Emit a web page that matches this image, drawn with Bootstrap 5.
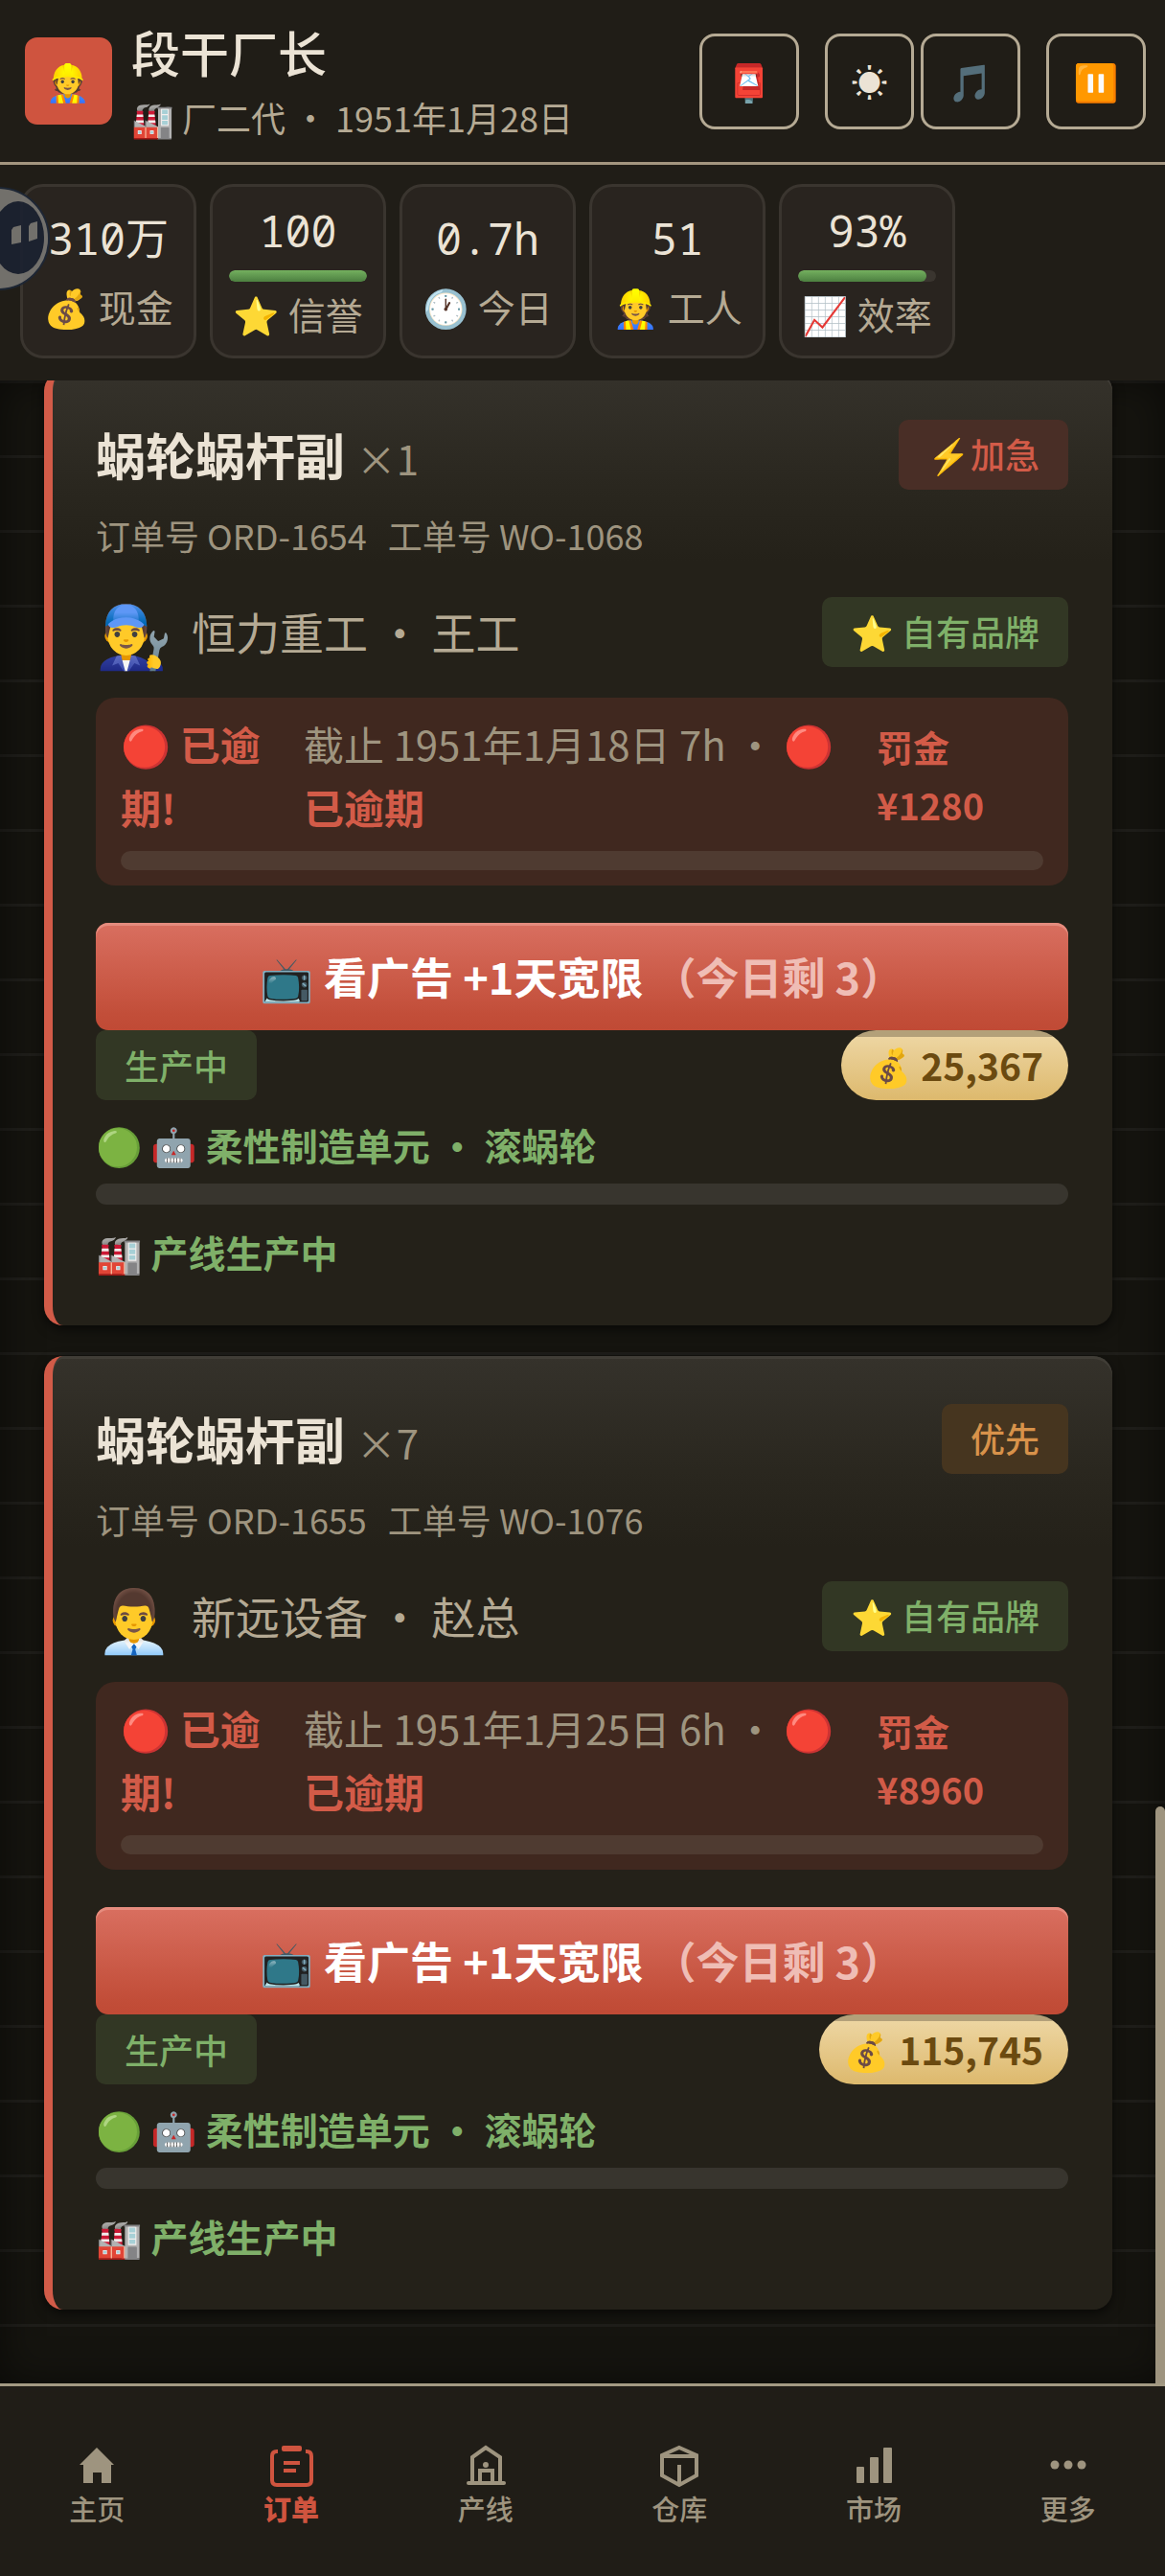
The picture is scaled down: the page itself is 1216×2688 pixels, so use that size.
<!DOCTYPE html>
<html lang="zh-CN">
<head>
<meta charset="utf-8">
<meta name="viewport" content="width=device-width, initial-scale=1">
<title>订单</title>
<link href="https://cdn.jsdelivr.net/npm/bootstrap@5.3.0/dist/css/bootstrap.min.css" rel="stylesheet">
<style>
:root{--bar:#201d17;--cream:#ebe3d5;--sand:#b5aa94;--mute:#9e947f;--red:#d25b48;--green:#7fb069}
body{background:#15140f;color:var(--cream);font-family:"Noto Sans CJK SC","Noto Color Emoji",sans-serif;line-height:1.6}
.shell{min-height:100vh}
.topbar,.stats{background:var(--bar);z-index:3}
.topbar{height:172px;border-bottom:3px solid #a3957f;padding:0 20px 0 26px}
.avatar{width:91px;height:91px;border-radius:13px;background:#cf543f;font-size:38px}
.who{padding:6px 0 0 20px}
.boss{font-size:51px;line-height:68px;font-weight:500}
.rank{font-size:36px;line-height:68px;color:var(--sand)}
.tools{gap:27px}
.tool-pair{gap:7px}
.tool{width:104px;height:100px;border:3px solid var(--sand);border-radius:16px;background:none;color:var(--cream);font-size:38px;padding:0}
.tool-sun{width:93px}
.stats{height:225px;padding:20px 21px 0;gap:14px}
.tile{width:184px;height:182px;border:3px solid #3a352f;border-radius:24px;background:#29241f;padding:0 17px 2px}
.figure-num{font-family:"Noto Sans Mono","Noto Sans CJK SC",monospace;font-size:45px;line-height:74px}
.figure-cap{font-size:39px;line-height:66px;color:var(--sand);white-space:nowrap}
.meter{height:12px;border-radius:6px;background:#3a352f;margin-top:4px}
.meter .progress-bar{background:linear-gradient(#74b05f,#4c7f40);border-radius:6px}
.floor{background:linear-gradient(transparent 75px,#1f1e1a 75px) 0 3px/100% 78px,#15140f;box-shadow:inset 0 0 40px #0008;padding:0 55px 75px 46px}
.order{background:linear-gradient(#35322b 0,#2a271f 12%,#242119 20%);border-left:9px solid var(--red);border-radius:20px;padding:44px 46px 46px 45px;box-shadow:0 4px 12px #0009,inset 0 3px 0 #403d36}
.order-first{margin-top:-9px}
.order+.order{margin-top:32px}
.item-name{font-size:52px;font-weight:700;line-height:84px;margin:0}
.item-qty{font-size:42px;line-height:1;font-weight:400;color:var(--mute)}
.chip{border-radius:10px;height:73px;padding:0 30px;font-size:36px;font-weight:500;display:inline-flex;align-items:center;white-space:pre}
.chip-red{background:#492e26;color:var(--red)}
.chip-amber{background:#46351f;color:#d8924a}
.chip-green{background:#323724;color:var(--green)}
.refs{font-size:36px;line-height:58px;color:var(--mute);gap:22px;margin-top:13px}
.buyer{height:96px;margin:24px 0 21px}
.face{font-size:64px;line-height:96px;width:100px}
.client{font-size:46px;color:var(--sand)}
.late{background:#40281f;border-radius:20px;padding:15px 26px 16px}
.late-text{font-size:42px;line-height:66px;gap:40px}
.late-state{flex:151 1 0}
.late-when{flex:558 1 0;color:var(--mute)}
.late-fine{flex:174 1 0;font-size:38px;line-height:61px}
.track{height:20px;border-radius:10px;background:#4f3b31;margin-top:13px}
.track-run{height:22px;border-radius:11px;background:#38352e;margin:10px 0 18px}
.red-text{color:var(--red);font-weight:700}
.ad{height:112px;margin-top:39px;border:0;border-radius:13px;background:linear-gradient(#d96f60,#c24e39 85%,#c04a35);box-shadow:inset 0 3px 0 #e58c7e;color:#fff;font-size:45px;font-weight:700}
.ad-left{color:#efbdb5;margin-left:10px}
.price{height:73px;border-radius:37px;padding:0 26px;background:linear-gradient(#b3a079 0 7px,#edd5a1 7px,#ddb96d);color:#6b4a10;font-size:39px;font-weight:700}
.run{font-size:39px;line-height:62px;font-weight:700;color:var(--green)}
.run-first{margin-top:15px}
.thumb{right:0;top:1885px;bottom:201px;width:10px;background:var(--mute);border-radius:5px 5px 0 0}
.buddy{left:-56px;top:195px;width:108px;height:108px;z-index:4}
.tabs{height:201px;border-top:3px solid #a39a83;background:var(--bar);z-index:3;padding-top:60px}
.tab{color:var(--mute);font-size:29px;line-height:38px;font-weight:500;text-decoration:none}
.tab.active{color:#cf543f;font-weight:900}
.tab svg{width:48px;height:48px;display:block}
</style>
</head>
<body>
<div class="shell d-flex flex-column position-relative overflow-hidden">
<header class="topbar d-flex align-items-center position-relative">
  <div class="avatar d-flex align-items-center justify-content-center">👷</div>
  <div class="who flex-grow-1">
    <div class="boss">段干厂长</div>
    <div class="rank">🏭 厂二代 · 1951年1月28日</div>
  </div>
  <div class="tools d-flex">
    <button class="tool" type="button" aria-label="邮箱">📮</button>
    <div class="tool-pair d-flex">
      <button class="tool tool-sun" type="button" aria-label="主题">☀</button>
      <button class="tool" type="button" aria-label="音乐">🎵</button>
    </div>
    <button class="tool" type="button" aria-label="暂停">⏸️</button>
  </div>
</header>
<section class="stats d-flex position-relative text-center">
  <div class="tile d-flex flex-column justify-content-center"><div class="figure-num">310万</div><div class="figure-cap">💰 现金</div></div>
  <div class="tile d-flex flex-column justify-content-center"><div class="figure-num">100</div><div class="progress meter"><div class="progress-bar" style="width:100%"></div></div><div class="figure-cap">⭐ 信誉</div></div>
  <div class="tile d-flex flex-column justify-content-center"><div class="figure-num">0.7h</div><div class="figure-cap">🕐 今日</div></div>
  <div class="tile d-flex flex-column justify-content-center"><div class="figure-num">51</div><div class="figure-cap">👷 工人</div></div>
  <div class="tile d-flex flex-column justify-content-center"><div class="figure-num">93%</div><div class="progress meter"><div class="progress-bar" style="width:93%"></div></div><div class="figure-cap">📈 效率</div></div>
</section>
<svg class="buddy position-absolute" viewBox="0 0 108 108" opacity=".9" aria-hidden="true">
  <circle cx="54" cy="54" r="53" fill="#7b7975" stroke="#1d2737" stroke-width="2"/>
  <ellipse cx="75" cy="53" rx="27" ry="38" fill="#1b2231"/>
  <path d="M70 42 78 40V58L68 60V45ZM88 38 95 36V54L86 57V41Z" fill="#7b7975"/>
</svg>
<main class="floor flex-grow-1">
  <article class="order order-first">
    <div class="d-flex justify-content-between align-items-center">
      <h2 class="item-name">蜗轮蜗杆副 <span class="item-qty">×1</span></h2>
      <span class="chip chip-red">⚡加急</span>
    </div>
    <div class="refs d-flex"><span>订单号 ORD-1654</span><span>工单号 WO-1068</span></div>
    <div class="buyer d-flex align-items-center">
      <span class="face">👨‍🔧</span><span class="client flex-grow-1">恒力重工 · 王工</span>
      <span class="chip chip-green">⭐ 自有品牌</span>
    </div>
    <div class="late">
      <div class="late-text d-flex align-items-center">
        <div class="late-state red-text">🔴 已逾期!</div>
        <div class="late-when">截止 1951年1月18日 7h · <span class="red-text">🔴</span> <span class="red-text">已逾期</span></div>
        <div class="late-fine red-text">罚金 ¥1280</div>
      </div>
      <div class="track"></div>
    </div>
    <button class="ad w-100 d-flex align-items-center justify-content-center" type="button">📺 看广告 +1天宽限<span class="ad-left">（今日剩 3）</span></button>
    <div class="d-flex justify-content-between">
      <span class="chip chip-green">生产中</span>
      <span class="price d-flex align-items-center">💰 25,367</span>
    </div>
    <div class="run run-first">🟢 🤖 柔性制造单元 · 滚蜗轮</div>
    <div class="track-run"></div>
    <div class="run">🏭 产线生产中</div>
  </article>
  <article class="order">
    <div class="d-flex justify-content-between align-items-center">
      <h2 class="item-name">蜗轮蜗杆副 <span class="item-qty">×7</span></h2>
      <span class="chip chip-amber">优先</span>
    </div>
    <div class="refs d-flex"><span>订单号 ORD-1655</span><span>工单号 WO-1076</span></div>
    <div class="buyer d-flex align-items-center">
      <span class="face">👨‍💼</span><span class="client flex-grow-1">新远设备 · 赵总</span>
      <span class="chip chip-green">⭐ 自有品牌</span>
    </div>
    <div class="late">
      <div class="late-text d-flex align-items-center">
        <div class="late-state red-text">🔴 已逾期!</div>
        <div class="late-when">截止 1951年1月25日 6h · <span class="red-text">🔴</span> <span class="red-text">已逾期</span></div>
        <div class="late-fine red-text">罚金 ¥8960</div>
      </div>
      <div class="track"></div>
    </div>
    <button class="ad w-100 d-flex align-items-center justify-content-center" type="button">📺 看广告 +1天宽限<span class="ad-left">（今日剩 3）</span></button>
    <div class="d-flex justify-content-between">
      <span class="chip chip-green">生产中</span>
      <span class="price d-flex align-items-center">💰 115,745</span>
    </div>
    <div class="run run-first">🟢 🤖 柔性制造单元 · 滚蜗轮</div>
    <div class="track-run"></div>
    <div class="run">🏭 产线生产中</div>
  </article>
</main>
<div class="thumb position-absolute"></div>
<nav class="tabs row g-0 position-relative">
  <a class="tab col d-flex flex-column align-items-center" href="#"><svg viewBox="0 0 48 48" fill="currentColor"><path d="M24 4 42 22H39V41H29V30H20V41H10V22H6Z"/></svg>主页</a>
  <a class="tab active col d-flex flex-column align-items-center" href="#" aria-current="page"><svg viewBox="0 0 48 48" fill="none" stroke="currentColor" stroke-width="4"><path d="M10 8H9Q4 8 4 13V38Q4 43 9 43H40Q45 43 45 38V13Q45 8 40 8H39M16 20H33M16 28H29"/><rect x="14" y="2" width="21" height="6" rx="2" fill="currentColor" stroke="none"/></svg>订单</a>
  <a class="tab col d-flex flex-column align-items-center" href="#"><svg viewBox="0 0 48 48" fill="none" stroke="currentColor" stroke-width="4"><path d="M6 41H43" stroke-linecap="round"/><path d="M10 40V14L24 4 39 14V40M18 40V28H31V40"/><circle cx="24" cy="22" r="3" fill="currentColor" stroke="none"/></svg>产线</a>
  <a class="tab col d-flex flex-column align-items-center" href="#"><svg viewBox="0 0 48 48" fill="none" stroke="currentColor" stroke-width="4"><path d="M24 4 42 12V33L24 43 6 33V12ZM6 13H42M24 22V42"/></svg>仓库</a>
  <a class="tab col d-flex flex-column align-items-center" href="#"><svg viewBox="0 0 48 48" fill="currentColor"><rect x="6" y="24" width="8" height="17" rx="1"/><rect x="20" y="14" width="9" height="27" rx="1"/><rect x="34" y="4" width="9" height="37" rx="1"/></svg>市场</a>
  <a class="tab col d-flex flex-column align-items-center" href="#"><svg viewBox="0 0 48 48" fill="currentColor"><circle cx="10" cy="22" r="4.5"/><circle cx="24" cy="22" r="4.5"/><circle cx="38" cy="22" r="4.5"/></svg>更多</a>
</nav>
</div>
<script src="https://cdn.jsdelivr.net/npm/bootstrap@5.3.0/dist/js/bootstrap.bundle.min.js"></script>
</body>
</html>
